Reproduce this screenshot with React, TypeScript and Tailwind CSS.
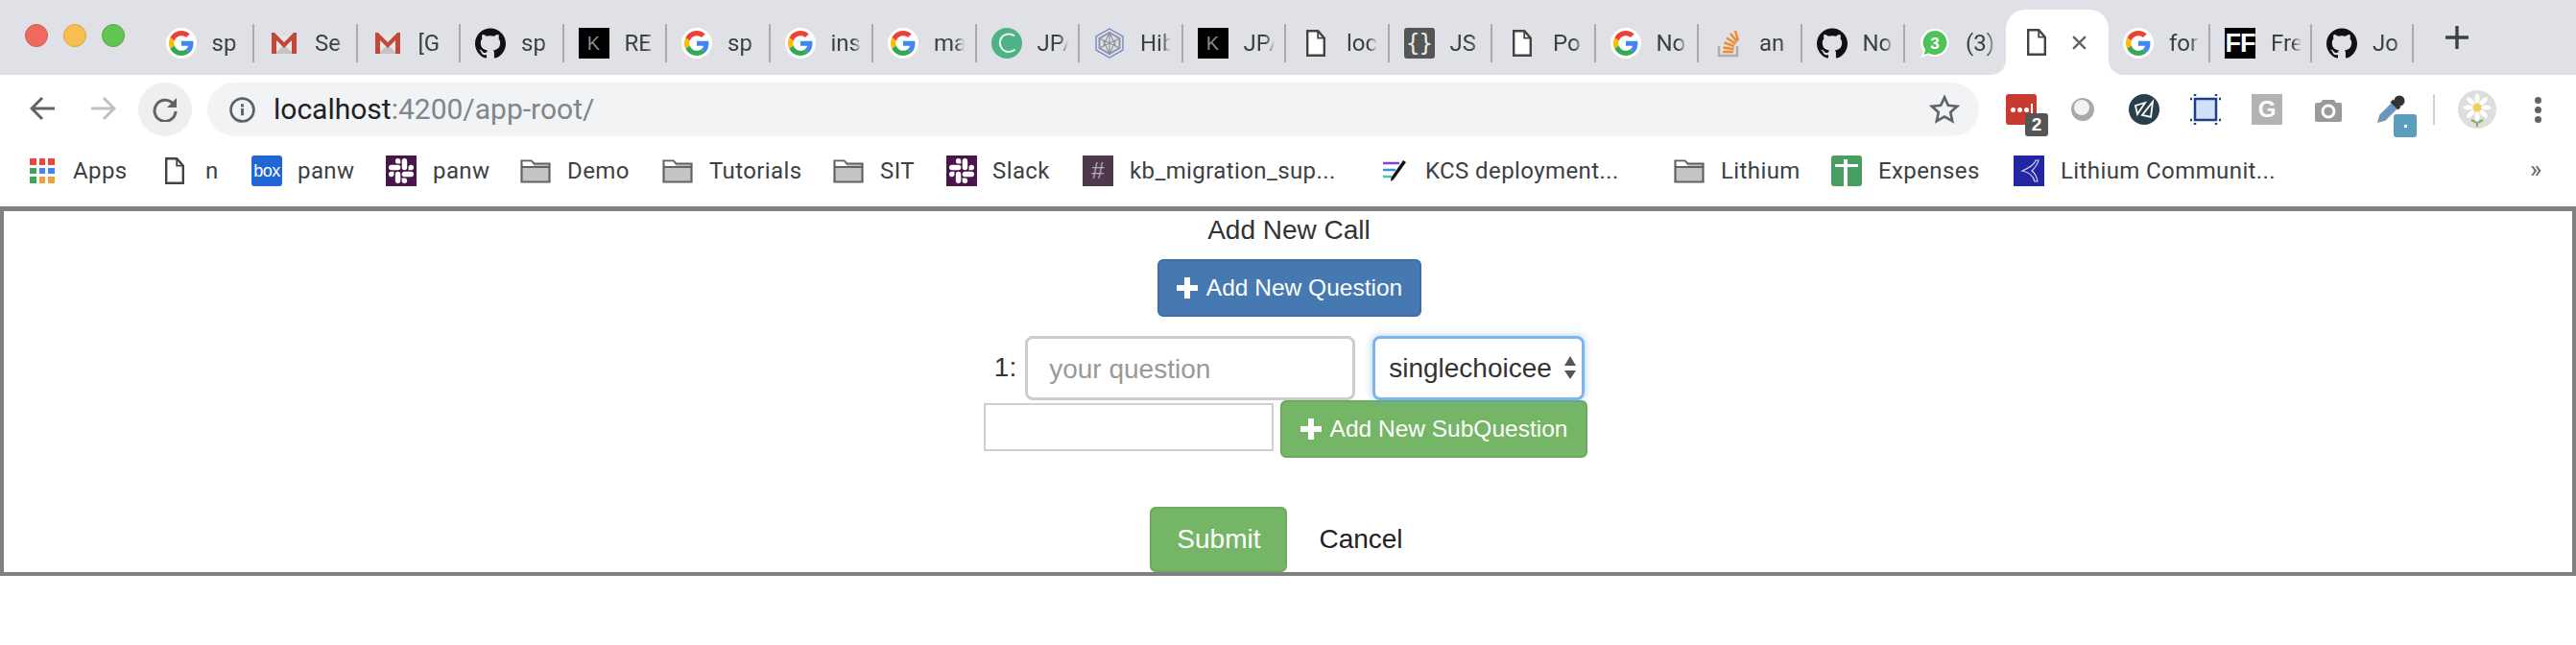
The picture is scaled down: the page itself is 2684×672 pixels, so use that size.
import { SiGithub, SiSlack } from 'react-icons/si';

const chromeFont = "font-['Roboto','Liberation_Sans',sans-serif]";

function GoogleIcon() {
  return (
    <div className="w-8 h-8 rounded-full bg-white flex items-center justify-center shrink-0">
      <svg viewBox="0 0 48 48" className="w-[26px] h-[26px]">
        <path fill="#EA4335" d="M24 9.5c3.54 0 6.71 1.22 9.21 3.6l6.85-6.85C35.9 2.38 30.47 0 24 0 14.62 0 6.51 5.38 2.56 13.22l7.98 6.19C12.43 13.72 17.74 9.5 24 9.5z" />
        <path fill="#4285F4" d="M46.98 24.55c0-1.57-.15-3.09-.38-4.55H24v9.02h12.94c-.58 2.96-2.26 5.48-4.78 7.18l7.73 6c4.51-4.18 7.09-10.36 7.09-17.65z" />
        <path fill="#FBBC05" d="M10.53 28.59c-.48-1.45-.76-2.99-.76-4.59s.27-3.14.76-4.59l-7.98-6.19C.92 16.46 0 20.12 0 24c0 3.88.92 7.54 2.56 10.78l7.97-6.19z" />
        <path fill="#34A853" d="M24 48c6.48 0 11.93-2.13 15.89-5.81l-7.73-6c-2.15 1.45-4.92 2.3-8.16 2.3-6.26 0-11.57-4.22-13.47-9.91l-7.98 6.19C6.51 42.62 14.62 48 24 48z" />
      </svg>
    </div>
  );
}

function GmailIcon() {
  return (
    <svg viewBox="0 0 32 32" className="w-8 h-8 shrink-0">
      <path fill="#e8e6e3" d="M4 8h24v19H4z" />
      <path fill="#c5c3c0" d="M6 27l10-9 10 9z" />
      <path fill="#c0493a" d="M3 5h3l10 10L26 5h3v22h-5V13l-8 8-8-8v14H3z" />
    </svg>
  );
}

function GithubIcon() {
  return <SiGithub className="w-8 h-8 shrink-0 text-[#111]" />;
}

function KIcon() {
  return (
    <div className="w-8 h-8 bg-black flex items-center justify-center shrink-0 text-[#8a8a8a] text-[20px] leading-none font-['Liberation_Sans',sans-serif]">
      K
    </div>
  );
}

function DocIcon() {
  return (
    <div className="w-8 h-8 flex items-center justify-center shrink-0">
      <svg viewBox="0 0 20 28" className="w-5 h-7">
        <path d="M1.200 1.200h11l6.600 7.500v18.100H1.200z" fill="#fff" stroke="#444" strokeWidth="2.400" />
        <path d="M12.200 1.200v7.500h6.600" fill="none" stroke="#444" strokeWidth="1.800" />
      </svg>
    </div>
  );
}

function CloudIcon() {
  return (
    <svg viewBox="0 0 32 32" className="w-8 h-8 shrink-0">
      <circle cx="16" cy="16" r="16" fill="#4fb286" />
      <path d="M24 8.500C20 5 12 6 9.500 12 7.500 18 11 25 18 25c3 0 5-1 6.500-2.500" fill="none" stroke="#e8f6f0" strokeWidth="2" />
    </svg>
  );
}

function HexIcon() {
  return (
    <svg viewBox="0 0 32 32" className="w-8 h-8 shrink-0">
      <path d="M16 1l14 8v14l-14 8-14-8V9z" fill="#dfe1e7" stroke="#6c86c4" strokeWidth="1.300" />
      <path d="M16 5l10.500 6v10L16 27 5.500 21V11z" fill="none" stroke="#8f959e" strokeWidth="2" />
      <path d="M16 5v22M5.500 11l21 10M26.500 11l-21 10M9 12l7 15 7-15M9 20l7-15 7 15" fill="none" stroke="#8f959e" strokeWidth="1.200" />
    </svg>
  );
}

function BracesIcon() {
  return (
    <div className="w-8 h-8 rounded-[3px] bg-[#555] flex items-center justify-center shrink-0 text-[#e8e8e8] text-[24px] leading-none font-['DejaVu_Sans_Mono',monospace] tracking-[-1px]">
      {'{}'}
    </div>
  );
}

function StackIcon() {
  return (
    <svg viewBox="0 0 32 32" className="w-8 h-8 shrink-0">
      <path d="M6 19v10h19V19" fill="none" stroke="#b0aeab" strokeWidth="2.500" />
      <path d="M10 25h11M10.500 20.500l11 1.500M11.500 15.500l10.500 3.500M14 10.500l9.500 6M18 6l7 8.500M23 3l3 10" fill="none" stroke="#ee8a2f" strokeWidth="2.500" />
    </svg>
  );
}

function WhatsappIcon() {
  return (
    <svg viewBox="0 0 32 32" className="w-8 h-8 shrink-0">
      <path d="M16 1a14.500 14.500 0 1 1-7 27.200L1.500 31l2.500-7A14.500 14.500 0 0 1 16 1z" fill="#fff" />
      <path d="M16 3a12.500 12.500 0 1 1-6.500 23.200L4.500 28l1.700-5A12.500 12.500 0 0 1 16 3z" fill="#4fc35b" />
      <text x="16" y="21.500" textAnchor="middle" fontSize="17" fontWeight="700" fill="#fff" fontFamily="Liberation Sans">3</text>
    </svg>
  );
}

function FFIcon() {
  return (
    <div className="w-8 h-8 bg-black flex items-center justify-center shrink-0 text-white text-[27px] leading-none font-bold tracking-[-1px] font-['Liberation_Sans',sans-serif]">
      FF
    </div>
  );
}

const tabs = [
  { icon: <GoogleIcon />, text: 'sp' },
  { icon: <GmailIcon />, text: 'Se' },
  { icon: <GmailIcon />, text: '[G' },
  { icon: <GithubIcon />, text: 'sp' },
  { icon: <KIcon />, text: 'RE' },
  { icon: <GoogleIcon />, text: 'sp' },
  { icon: <GoogleIcon />, text: 'ins' },
  { icon: <GoogleIcon />, text: 'ma' },
  { icon: <CloudIcon />, text: 'JPA' },
  { icon: <HexIcon />, text: 'Hib' },
  { icon: <KIcon />, text: 'JPA' },
  { icon: <DocIcon />, text: 'loc' },
  { icon: <BracesIcon />, text: 'JS' },
  { icon: <DocIcon />, text: 'Po' },
  { icon: <GoogleIcon />, text: 'No' },
  { icon: <StackIcon />, text: 'an' },
  { icon: <GithubIcon />, text: 'No' },
  { icon: <WhatsappIcon />, text: '(3)' },
];

const rightTabs = [
  { icon: <GoogleIcon />, text: 'for' },
  { icon: <FFIcon />, text: 'Fre' },
  { icon: <GithubIcon />, text: 'Jo' },
];

function Tab({ icon, text, width }: { icon: React.ReactNode; text: string; width: string }) {
  return (
    <div className={`${width} h-10 flex items-center pl-[15px] shrink-0 border-r-2 border-[#a9abae]`}>
      {icon}
      <div className="ml-4 w-[32px] overflow-hidden whitespace-nowrap text-[24px] leading-8 text-[#3c4043] [mask-image:linear-gradient(to_right,black_70%,transparent)]">
        {text}
      </div>
    </div>
  );
}

function ActiveTab() {
  return (
    <div className="relative w-[107px] h-[68px] -ml-[2.5px] bg-white rounded-t-[20px] flex items-center pl-4 shrink-0">
      <DocIcon />
      <svg viewBox="0 0 16 16" className="w-[17px] h-[17px] ml-5">
        <path d="M2 2l12 12M14 2L2 14" stroke="#5f6368" strokeWidth="2.200" />
      </svg>
      {/* flares where the tab meets the toolbar */}
      <svg viewBox="0 0 15 15" className="absolute bottom-0 -left-[15px] w-[15px] h-[15px]">
        <path d="M15 0v15H0c8 0 15-7 15-15z" fill="#fff" />
      </svg>
      <svg viewBox="0 0 15 15" className="absolute bottom-0 -right-[15px] w-[15px] h-[15px]">
        <path d="M0 0v15h15C7 15 0 8 0 0z" fill="#fff" />
      </svg>
    </div>
  );
}

function TabStrip() {
  return (
    <div className="h-[78px] bg-[#dfe1e6] flex items-start">
      <div className="flex gap-4 w-[157.5px] pl-[26px] pt-[25px] shrink-0">
        <div className="w-6 h-6 rounded-full bg-[#ee6a5f] border border-[#d9544b]"></div>
        <div className="w-6 h-6 rounded-full bg-[#f6bf4f] border border-[#dba43c]"></div>
        <div className="w-6 h-6 rounded-full bg-[#61c554] border border-[#51a83f]"></div>
      </div>
      <div className="flex items-center h-[78px]">
        <div className="flex items-start h-[78px] pt-[25px]">
          {tabs.map((t, i) => (
            <Tab key={i} icon={t.icon} text={t.text} width="w-[107.5px]" />
          ))}
        </div>
        <div className="self-end h-[68px] flex">
          <ActiveTab />
        </div>
        <div className="flex items-start h-[78px] pt-[25px]">
          {rightTabs.map((t, i) => (
            <Tab key={i} icon={t.icon} text={t.text} width="w-[106px]" />
          ))}
        </div>
        <svg viewBox="0 0 24 24" className="w-6 h-6 ml-[33px] -mt-[1px]">
          <path d="M12 0v24M0 12h24" stroke="#3c4043" strokeWidth="3.400" />
        </svg>
      </div>
    </div>
  );
}

function ExtensionIcons() {
  return (
    <div className="flex items-center ml-[28px] h-14">
      <div className="relative w-8 h-8 bg-[#c8392f] rounded-[3px] flex items-center justify-center gap-[2px]">
        <div className="w-[5px] h-[5px] rounded-full bg-white"></div>
        <div className="w-[5px] h-[5px] rounded-full bg-white"></div>
        <div className="w-[5px] h-[5px] rounded-full bg-white"></div>
        <div className="w-[2px] h-3 bg-white"></div>
        <div className="absolute left-5 top-5 w-6 h-6 rounded-[3px] bg-[#555] text-white text-[19px] leading-6 font-bold text-center font-['Liberation_Sans',sans-serif]">
          2
        </div>
      </div>
      <svg viewBox="0 0 26 26" className="w-[26px] h-[26px] ml-[35px]">
        <circle cx="13" cy="13" r="12" fill="#a9a9a9" />
        <circle cx="12" cy="11" r="8" fill="#f2f2f2" />
      </svg>
      <svg viewBox="0 0 32 32" className="w-8 h-8 ml-[35px]">
        <circle cx="16" cy="16" r="16" fill="#2a3f4c" />
        <path d="M7 12l10-3-8 12zM25 8l-2 16-9-2z" fill="none" stroke="#fff" strokeWidth="1.800" />
      </svg>
      <svg viewBox="0 0 32 32" className="w-8 h-8 ml-8">
        <rect x="5" y="5" width="22" height="22" fill="#cfe0f8" stroke="#1c3f8c" strokeWidth="2.500" />
        <path d="M5 0v2M27 0v2M5 30v2M27 30v2M0 5h2M0 27h2M30 5h2M30 27h2" stroke="#1c3f8c" strokeWidth="2.500" />
      </svg>
      <div className="w-8 h-8 ml-8 bg-[#b2b2b2] flex items-center justify-center text-white text-[24px] leading-none font-bold font-['Liberation_Sans',sans-serif]">
        G
      </div>
      <svg viewBox="0 0 28 26" className="w-7 h-[26px] ml-[34px]">
        <path d="M8 3h12l2 3h4a2 2 0 0 1 2 2v16a2 2 0 0 1-2 2H2a2 2 0 0 1-2-2V8a2 2 0 0 1 2-2h4z" fill="#9a9a9a" />
        <circle cx="14" cy="15" r="6" fill="none" stroke="#fff" strokeWidth="3" />
      </svg>
      <div className="relative w-[30px] h-[30px] ml-9">
        <svg viewBox="0 0 30 30" className="w-[30px] h-[30px]">
          <path d="M2 28l2-7L17 8l5 5L9 26z" fill="#5b9ccc" stroke="#8c9299" strokeWidth="1.500" />
          <path d="M16 6l8 8" stroke="#333" strokeWidth="4" />
          <circle cx="24" cy="6" r="5.500" fill="#333" />
        </svg>
        <div className="absolute left-[18px] top-5 w-6 h-6 rounded-[3px] bg-[#5b9dbc] flex items-center justify-center">
          <div className="w-[3px] h-[3px] bg-white"></div>
        </div>
      </div>
      <div className="w-[2px] h-8 bg-[#d0d0d0] ml-[29px]"></div>
      <div className="w-10 h-10 ml-6 rounded-full bg-[#dedede] flex items-center justify-center overflow-hidden">
        <svg viewBox="0 0 40 40" className="w-10 h-10">
          <path d="M20 26v12M20 34l-6-3M20 34l6-3" stroke="#7fae5a" strokeWidth="2" />
          <g fill="#fff" stroke="#cfcfcf" strokeWidth="0.500">
            <ellipse cx="20" cy="9" rx="3" ry="6" />
            <ellipse cx="20" cy="27" rx="3" ry="6" />
            <ellipse cx="11" cy="18" rx="6" ry="3" />
            <ellipse cx="29" cy="18" rx="6" ry="3" />
            <ellipse cx="13.500" cy="11.500" rx="3" ry="6" transform="rotate(-45 13.500 11.500)" />
            <ellipse cx="26.500" cy="11.500" rx="3" ry="6" transform="rotate(45 26.500 11.500)" />
            <ellipse cx="13.500" cy="24.500" rx="3" ry="6" transform="rotate(45 13.500 24.500)" />
            <ellipse cx="26.500" cy="24.500" rx="3" ry="6" transform="rotate(-45 26.500 24.500)" />
          </g>
          <circle cx="20" cy="18" r="4.500" fill="#f0cf5a" />
        </svg>
      </div>
      <div className="flex flex-col gap-[3px] ml-10">
        <div className="w-[7px] h-[7px] rounded-full bg-[#5f6368]"></div>
        <div className="w-[7px] h-[7px] rounded-full bg-[#5f6368]"></div>
        <div className="w-[7px] h-[7px] rounded-full bg-[#5f6368]"></div>
      </div>
    </div>
  );
}

function Toolbar() {
  return (
    <div className="h-[72px] flex items-start pt-2 bg-white">
      <svg viewBox="0 0 26 26" className="w-[26px] h-[26px] ml-[31px] mt-[14px]">
        <path d="M26 13H3M13 2L2 13l11 11" fill="none" stroke="#5f6368" strokeWidth="3" />
      </svg>
      <svg viewBox="0 0 26 26" className="w-[26px] h-[26px] ml-[38px] mt-[14px]">
        <path d="M0 13h23M13 2l11 11-11 11" fill="none" stroke="#bdc1c6" strokeWidth="3" />
      </svg>
      <div className="w-14 h-14 ml-[23px] rounded-full bg-[#efefef] flex items-center justify-center">
        <svg viewBox="0 0 26 26" className="w-[26px] h-[26px]">
          <path d="M22 8A11 11 0 1 0 24 15" fill="none" stroke="#5f6368" strokeWidth="3" />
          <path d="M25 1v10H15z" fill="#5f6368" />
        </svg>
      </div>
      <div className="w-[1846px] h-14 ml-4 rounded-full bg-[#f1f3f4] flex items-center pl-[23px] pr-5">
        <svg viewBox="0 0 26 26" className="w-[27px] h-[27px] shrink-0">
          <circle cx="13" cy="13" r="11.500" fill="none" stroke="#5f6368" strokeWidth="2.600" />
          <path d="M13 11.500v7M13 7v3" stroke="#5f6368" strokeWidth="2.800" />
        </svg>
        <div className="ml-[19px] text-[30px] leading-none text-[#80868b] whitespace-nowrap">
          <span className="text-[#202124]">localhost</span>:4200/app-root/
        </div>
        <svg viewBox="0 0 24 24" className="w-[32px] h-[32px] ml-auto">
          <path d="M12 2.500l2.900 6.300 6.900.8-5.100 4.700 1.400 6.800-6.100-3.400-6.100 3.400 1.400-6.800-5.100-4.700 6.900-.8z" fill="none" stroke="#5f6368" strokeWidth="2" />
        </svg>
      </div>
      <ExtensionIcons />
    </div>
  );
}

function AppsIcon() {
  const colors = ['bg-[#e8453c]', 'bg-[#e8453c]', 'bg-[#e8453c]', 'bg-[#3aa757]', 'bg-[#4285f4]', 'bg-[#4285f4]', 'bg-[#3aa757]', 'bg-[#e9a53a]', 'bg-[#e9a53a]'];
  return (
    <div className="grid grid-cols-3 gap-[3px] w-[26px] h-[26px] shrink-0">
      {colors.map((c, i) => (
        <div key={i} className={c}></div>
      ))}
    </div>
  );
}

function FolderIcon() {
  return (
    <svg viewBox="0 0 32 26" className="w-8 h-[26px] shrink-0">
      <path d="M1.500 24.500V2.500h10l3 3h16v19z" fill="#c4c4c4" stroke="#5f6368" strokeWidth="2.200" />
      <path d="M1.500 9h29" stroke="#5f6368" strokeWidth="2" />
      <path d="M2.500 3.500h9l3 4.500h-11.500z" fill="#fff" />
    </svg>
  );
}

function BoxIcon() {
  return (
    <div className="w-8 h-8 rounded-[3px] bg-[#2066d5] flex items-center justify-center shrink-0 text-white text-[18px] leading-none tracking-[-0.5px] font-['Liberation_Sans',sans-serif]">
      box
    </div>
  );
}

function SlackSquare() {
  return (
    <div className="w-8 h-8 bg-[#4a154b] flex items-center justify-center shrink-0">
      <SiSlack className="w-[26px] h-[26px] text-white" />
    </div>
  );
}

function HashIcon() {
  return (
    <div className="w-8 h-8 bg-[#4d394b] flex items-center justify-center shrink-0 text-[#b6a8b5] text-[24px] leading-none font-['Liberation_Sans',sans-serif]">
      #
    </div>
  );
}

function KcsIcon() {
  return (
    <svg viewBox="0 0 32 32" className="w-8 h-8 shrink-0">
      <path d="M1 8h17" stroke="#8a3ee0" strokeWidth="2.500" />
      <path d="M1 15h13" stroke="#3d93d6" strokeWidth="2.500" />
      <path d="M1 22h9" stroke="#44c4bd" strokeWidth="2.500" />
      <path d="M22 5l3 2-13 18-3 2 .5-4z" fill="#111" />
    </svg>
  );
}

function SheetsIcon() {
  return (
    <div className="relative w-8 h-8 rounded-[3px] bg-[#479e60] shrink-0 overflow-hidden">
      <div className="absolute left-[4px] right-[4px] top-[9px] h-[3px] bg-white"></div>
      <div className="absolute left-[13px] w-[4px] top-[4px] bottom-0 bg-white"></div>
    </div>
  );
}

function LithiumIcon() {
  return (
    <svg viewBox="0 0 32 32" className="w-8 h-8 shrink-0">
      <rect width="32" height="32" fill="#2326a0" />
      <path d="M23 5c-1 5-8 8-14 11 6 1 11 4 13 11h3c-1-5-3-9-6-11 3-3 6-6 7-11z" fill="none" stroke="#d6d8f5" strokeWidth="1.200" />
    </svg>
  );
}

const bookmarks = [
  { icon: <AppsIcon />, text: 'Apps', w: 'w-[135px]', gap: 'ml-[19px]' },
  { icon: <DocIcon />, text: 'n', w: 'w-[96px]', gap: 'ml-[16px]' },
  { icon: <BoxIcon />, text: 'panw', w: 'w-[140px]', gap: 'ml-[16px]' },
  { icon: <SlackSquare />, text: 'panw', w: 'w-[140px]', gap: 'ml-[17px]' },
  { icon: <FolderIcon />, text: 'Demo', w: 'w-[148px]', gap: 'ml-[17px]' },
  { icon: <FolderIcon />, text: 'Tutorials', w: 'w-[178px]', gap: 'ml-[17px]' },
  { icon: <FolderIcon />, text: 'SIT', w: 'w-[118px]', gap: 'ml-[17px]' },
  { icon: <SlackSquare />, text: 'Slack', w: 'w-[142px]', gap: 'ml-[16px]' },
  { icon: <HashIcon />, text: 'kb_migration_sup...', w: 'w-[312px]', gap: 'ml-[17px]' },
  { icon: <KcsIcon />, text: 'KCS deployment...', w: 'w-[304px]', gap: 'ml-[13px]' },
  { icon: <FolderIcon />, text: 'Lithium', w: 'w-[164px]', gap: 'ml-[17px]' },
  { icon: <SheetsIcon />, text: 'Expenses', w: 'w-[190px]', gap: 'ml-[17px]' },
  { icon: <LithiumIcon />, text: 'Lithium Communit...', w: 'w-[240px]', gap: 'ml-[17px]' },
];

function BookmarksBar() {
  return (
    <div className="h-[65px] flex items-start pt-3 pl-[31px] bg-white">
      {bookmarks.map((b, i) => (
        <div key={i} className={`${b.w} h-8 flex items-center shrink-0`}>
          {b.icon}
          <span className={`${b.gap} text-[24px] leading-8 tracking-[0.4px] text-[#3c4043] whitespace-nowrap`}>{b.text}</span>
        </div>
      ))}
      <span className="ml-[298px] text-[26px] leading-7 text-[#5f6368]">»</span>
    </div>
  );
}

function PlusGlyph() {
  return (
    <svg viewBox="0 0 22 22" className="w-[22px] h-[22px] shrink-0">
      <path d="M8 0h6v8h8v6h-8v8H8v-8H0V8h8z" fill="#fff" />
    </svg>
  );
}

function CallForm() {
  return (
    <div className="h-[385px] border-x-4 border-t-[5px] border-b-4 border-[#808080] flex flex-col items-center font-['Liberation_Sans',sans-serif] text-[#333]">
      <div className="h-10 ml-[2px] text-[28px] leading-10">Add New Call</div>
      <button className="mt-[10px] ml-[3px] w-[275px] h-[60px] rounded-[6px] bg-[#4679b2] border-2 border-[#3f6ea3] text-white text-[24.5px] flex items-center justify-center gap-[9px]">
        <PlusGlyph />
        Add New Question
      </button>
      <div className="mt-5 flex items-start pl-[3px]">
        <span className="text-[28px] leading-[66px] mr-[9px]">1:</span>
        <input
          className="w-[344px] h-[67px] rounded-[8px] border-[3px] border-[#ccc] px-[22px] pt-[2px] text-[28px] outline-none placeholder:text-[#999]"
          placeholder="your question"
        />
        <div className="relative ml-[18px]">
          <select className="w-[221px] h-[67px] rounded-[8px] border-[3px] border-[#7db4ea] bg-white pl-[14px] text-[28px] appearance-none outline-none shadow-[0_0_8px_rgba(102,175,233,0.6)]">
            <option>singlechoicee</option>
          </select>
          <svg viewBox="0 0 12 24" className="absolute right-[9px] top-[21px] w-3 h-6 pointer-events-none">
            <path d="M6 0l6 10H0zM0 15h12l-6 9z" fill="#555" />
          </svg>
        </div>
      </div>
      <div className="flex items-start gap-[7px] pr-[5px]">
        <input className="mt-[3px] w-[302px] h-[50px] border-2 border-[#cfcfcf] outline-none" />
        <button className="w-[320px] h-[60px] rounded-[6px] bg-[#74b566] border-2 border-[#6cab5e] text-white text-[24.5px] flex items-center justify-center gap-[9px]">
          <PlusGlyph />
          Add New SubQuestion
        </button>
      </div>
      <div className="mt-[51px] flex items-start">
        <button className="w-[143px] h-[68px] rounded-[6px] bg-[#74b566] border-2 border-[#6cab5e] text-white text-[28px]">
          Submit
        </button>
        <button className="ml-[9px] px-6 h-[68px] text-[28px] text-[#222]">Cancel</button>
      </div>
    </div>
  );
}

export default function App() {
  return (
    <div className={`w-[2684px] h-[672px] bg-white overflow-hidden ${chromeFont}`}>
      <TabStrip />
      <Toolbar />
      <BookmarksBar />
      <CallForm />
    </div>
  );
}
